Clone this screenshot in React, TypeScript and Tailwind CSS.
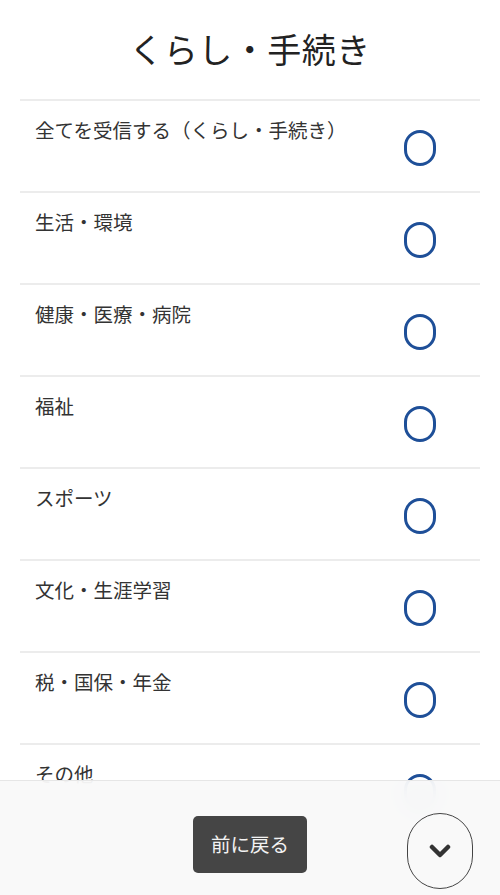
import React from "react";

const items = [
  "全てを受信する（くらし・手続き）",
  "生活・環境",
  "健康・医療・病院",
  "福祉",
  "スポーツ",
  "文化・生涯学習",
  "税・国保・年金",
  "その他",
];

export default function App() {
  return (
    <div
      className="relative w-[500px] h-[895px] overflow-hidden bg-white text-[#333]"
      style={{ fontFamily: '"Noto Sans CJK JP", "Noto Sans", sans-serif' }}
    >
      <h1 className="h-[99px] flex items-center justify-center text-[34px] leading-none text-[#222] tracking-[0.5px] pb-[2px]">
        くらし・手続き
      </h1>
      <ul className="mx-[20px]">
        {items.map((t) => (
          <li
            key={t}
            className="h-[92px] border-t-2 border-[#ececec] flex justify-between pl-[15px] pr-[44px]"
          >
            <span className="pt-[15px] text-[19.5px] leading-[28px]">{t}</span>
            <span className="mt-[29px] w-[32px] h-[36px] rounded-full border-[3px] border-[#1e4f98] shrink-0" />
          </li>
        ))}
      </ul>
      <div className="fixed left-0 bottom-0 w-[500px] h-[115px] border-t border-[#e6e6e6] bg-[#f8f8f8]/90 backdrop-blur-md flex items-center justify-center">
        <button className="mt-[12px] w-[114px] h-[57px] rounded-[5px] bg-[#454545] text-[#f2f2f2] text-[19.5px]">
          前に戻る
        </button>
        <button className="absolute left-[407px] top-[32px] w-[66px] h-[76px] rounded-full border-[1.5px] border-[#444] flex items-center justify-center">
          <svg width="22" height="14" viewBox="0 0 22 14">
            <path
              d="M3 3 L11 11 L19 3"
              fill="none"
              stroke="#333"
              strokeWidth="4.5"
              strokeLinecap="round"
              strokeLinejoin="round"
            />
          </svg>
        </button>
      </div>
    </div>
  );
}
